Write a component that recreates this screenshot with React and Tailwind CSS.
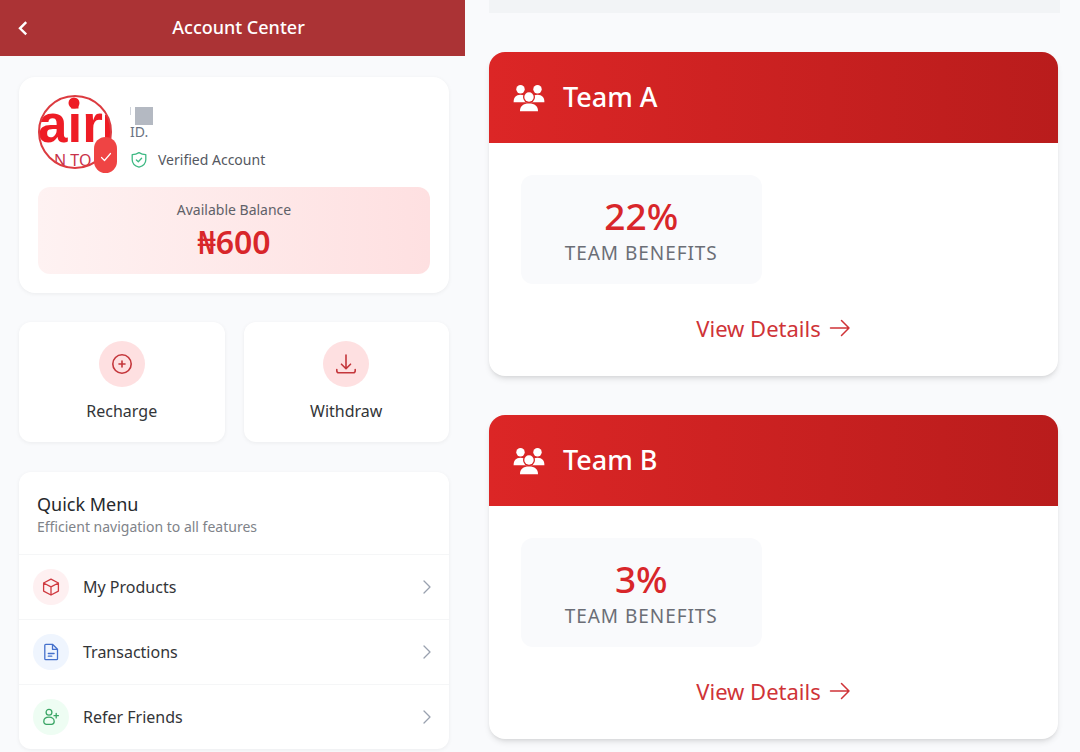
import React from "react";

const stroke = {
  fill: "none",
  stroke: "currentColor",
  strokeLinecap: "round",
  strokeLinejoin: "round",
};

function BackIcon() {
  return (
    <svg viewBox="0 0 16 16" className="size-4" {...stroke} strokeWidth="2.4" strokeLinecap="butt" strokeLinejoin="miter" aria-hidden="true">
      <path d="M11.2 2.2 5 8.3l6.2 6" />
    </svg>
  );
}

function ShieldIcon() {
  return (
    <svg viewBox="0 0 18 18" className="size-[18px] text-[#3fb984]" {...stroke} strokeWidth="1.3" aria-hidden="true">
      <path d="M9 1.600c2 1.300 4.200 2 6.800 2.100v5c0 3.600-2.600 6.200-6.800 7.500-4.200-1.300-6.800-3.900-6.800-7.500v-5C4.800 3.600 7 2.900 9 1.600Z" />
      <path d="m6.400 9 1.900 1.800 3.300-3.600" />
    </svg>
  );
}

function PlusCircleIcon() {
  return (
    <svg viewBox="0 0 24 24" className="size-6" {...stroke} strokeWidth="1.6" aria-hidden="true">
      <circle cx="12" cy="12" r="9.200" />
      <path d="M12 9v6M9 12h6" />
    </svg>
  );
}

function DownloadIcon() {
  return (
    <svg viewBox="0 0 24 24" className="size-6" {...stroke} strokeWidth="1.600" aria-hidden="true">
      <path d="M12 3v13.500M7.500 12.200l4.500 4.500 4.500-4.500M2.800 17.500v1.300c0 1.200.8 2 2 2h14.400c1.200 0 2-.8 2-2v-1.300" />
    </svg>
  );
}

function BoxIcon() {
  return (
    <svg viewBox="0 0 20 20" className="size-5" {...stroke} strokeWidth="1.300" aria-hidden="true">
      <path d="M10 2.200 17.400 6v8.100L10 18l-7.400-3.900V6ZM2.600 6l7.400 3.800L17.400 6M10 9.800V18" />
    </svg>
  );
}

function FileIcon() {
  return (
    <svg viewBox="0 0 20 20" className="size-5" {...stroke} strokeWidth="1.300" aria-hidden="true">
      <path d="M4.800 2.300h6.700l5 5v9.400c0 .6-.4 1-1 1H4.800c-.6 0-1-.4-1-1V3.300c0-.6.4-1 1-1ZM11.500 2.300v5h5M7.300 11.500h5.800M7.300 14.200h3.500" />
    </svg>
  );
}

function UserPlusIcon() {
  return (
    <svg viewBox="0 0 20 20" className="size-5" {...stroke} strokeWidth="1.300" aria-hidden="true">
      <circle cx="8" cy="5.200" r="2.900" />
      <path d="M8 10.200c3.300 0 5.200 1.700 5.200 4.300 0 1.800-1.100 2.800-2.700 2.800h-5c-1.600 0-2.700-1-2.700-2.800 0-2.600 1.900-4.300 5.200-4.300ZM15.200 6.500v4.400M13 8.700h4.400" />
    </svg>
  );
}

function ChevronIcon() {
  return (
    <svg viewBox="0 0 16 16" className="size-4 text-gray-400" {...stroke} strokeWidth="1.300" aria-hidden="true">
      <path d="m5 2 6 6-6 6" />
    </svg>
  );
}

function ArrowIcon() {
  return (
    <svg viewBox="0 0 22 22" className="size-[22px]" {...stroke} strokeWidth="1.500" aria-hidden="true">
      <path d="M1.500 11h18.500M12.500 3.500 20 11l-7.500 7.500" />
    </svg>
  );
}

function TeamIcon({ id }) {
  return (
    <svg viewBox="0 0 32 28" className="h-7 w-8" fill="currentColor" aria-hidden="true">
      <mask id={id}>
        <rect width="32" height="28" fill="white" />
        <circle cx="16" cy="13" r="6" fill="black" />
      </mask>
      <g mask={`url(#${id})`}>
        <circle cx="7.500" cy="5.200" r="4.200" />
        <circle cx="24.500" cy="5.200" r="4.200" />
        <path d="M.6 18.200c0-4.600 2.200-7.400 6.900-7.400s6.900 2.800 6.900 7.400Z" />
        <path d="M17.600 18.200c0-4.600 2.200-7.400 6.900-7.400s6.900 2.800 6.900 7.400Z" />
      </g>
      <circle cx="16" cy="13" r="4.700" />
      <path d="M7 27.200c0-5 3.200-7.600 9-7.600s9 2.600 9 7.600Z" />
    </svg>
  );
}

function Avatar() {
  return (
    <div className="relative size-[74px] shrink-0">
      <svg viewBox="0 0 74 74" className="size-full" role="img" aria-label="Profile picture">
        <defs>
          <clipPath id="avatar-clip">
            <circle cx="37" cy="37" r="36" />
          </clipPath>
        </defs>
        <g clipPath="url(#avatar-clip)" fill="#ee1c25">
          <text x="0" y="47" fontSize="53" fontWeight="700" fontFamily="'Liberation Sans', sans-serif">air</text>
          <circle cx="36" cy="8" r="5.500" />
          <path d="M67 20h6v28h-3c-2 0-3-2-3-5Z" />
          <text x="16" y="71" fontSize="16" fill="#c8324a" fontFamily="'Noto Sans', sans-serif">N TO</text>
        </g>
        <circle cx="37" cy="37" r="36" fill="none" stroke="#dc3b40" strokeWidth="2" />
      </svg>
      <span className="absolute -right-[5px] -bottom-1 flex h-9 w-[23px] items-center justify-center rounded-full bg-[#ef4444] text-white">
        <svg viewBox="0 0 12 12" className="mt-1 size-3" {...stroke} strokeWidth="1.200" aria-hidden="true">
          <path d="m1.500 6.500 3 3 6-7" />
        </svg>
      </span>
    </div>
  );
}

const actions = [
  { label: "Recharge", Icon: PlusCircleIcon },
  { label: "Withdraw", Icon: DownloadIcon },
];

const menu = [
  { label: "My Products", Icon: BoxIcon, tone: "bg-[#fef0f1] text-[#cf3a40]" },
  { label: "Transactions", Icon: FileIcon, tone: "bg-[#eff5fe] text-[#4470cc]" },
  { label: "Refer Friends", Icon: UserPlusIcon, tone: "bg-[#eefdf3] text-[#3aa565]" },
];

const teams = [
  { id: "team-a", name: "Team A", benefit: "22%" },
  { id: "team-b", name: "Team B", benefit: "3%" },
];

const softShadow = "shadow-[0_1px_4px_rgba(0,0,0,0.06)]";

function AccountCenter() {
  return (
    <section>
      <header className="grid h-14 grid-cols-[1fr_auto_1fr] items-center bg-[#ab3335] px-[15px] text-white">
        <button type="button" aria-label="Back" className="justify-self-start">
          <BackIcon />
        </button>
        <h1 className="pb-0.5 pl-3 text-lg font-medium">Account Center</h1>
      </header>

      <div className="pt-[21px] pr-4 pl-[19px]">
        <div className={`rounded-2xl bg-white px-[19px] pt-[18px] pb-[19px] ${softShadow}`}>
          <div className="flex gap-[18px]">
            <Avatar />
            <div className="flex flex-col pt-3">
              <div className="flex h-[17px] gap-1">
                <span className="h-2 w-px bg-gray-300" />
                <span className="size-[18px] bg-[#b4b9c2]" />
              </div>
              <p className="h-6 text-sm leading-4 text-gray-500">ID.</p>
              <p className="flex items-center gap-[10px] text-sm leading-6 text-[#55585f]">
                <ShieldIcon />
                Verified Account
              </p>
            </div>
          </div>
          <div className="mt-[15px] rounded-xl bg-linear-to-r from-[#fef2f2] to-[#fee0e1] pt-[11px] pb-[13px] text-center">
            <p className="text-sm leading-6 text-[#5f6168]">Available Balance</p>
            <p className="text-[32px] leading-[39px] font-semibold text-[#d8262a]">₦600</p>
          </div>
        </div>

        <div className="mt-[29px] grid grid-cols-2 gap-[19px]">
          {actions.map(({ label, Icon }) => (
            <button key={label} type="button" className={`flex flex-col items-center rounded-xl bg-white py-[19px] ${softShadow}`}>
              <span className="flex size-[46px] items-center justify-center rounded-full bg-[#fee0e1] text-[#c4363b]">
                <Icon />
              </span>
              <span className="mt-3 text-base leading-6 text-[#333538]">{label}</span>
            </button>
          ))}
        </div>

        <nav className={`mt-[30px] rounded-xl bg-white ${softShadow}`}>
          <div className="px-[18px] pt-[19px] pb-[17px]">
            <h2 className="text-lg leading-[26px] text-[#26292d]">Quick Menu</h2>
            <p className="text-sm leading-5 text-[#808389]">Efficient navigation to all features</p>
          </div>
          {menu.map(({ label, Icon, tone }) => (
            <a key={label} href="#" className="flex h-[65px] items-center border-t border-[#f5f6f7] px-[14px]">
              <span className={`flex size-9 items-center justify-center rounded-full ${tone}`}>
                <Icon />
              </span>
              <span className="ml-[14px] flex-1 text-base text-[#333538]">{label}</span>
              <ChevronIcon />
            </a>
          ))}
        </nav>
      </div>
    </section>
  );
}

function TeamCard({ id, name, benefit }) {
  return (
    <article className="overflow-hidden rounded-2xl bg-white shadow-md">
      <header className="flex h-[91px] items-center gap-[18px] bg-linear-to-r from-[#dc2626] to-[#b91c1c] px-6 text-white">
        <TeamIcon id={id} />
        <h2 className="text-[27px] font-medium">{name}</h2>
      </header>
      <div className="px-8 pt-8 pb-7">
        <div className="grid grid-cols-2 gap-6">
          <div className="rounded-xl bg-[#f9fafc] pt-[17px] pb-[18px] text-center">
            <p className="text-[37px] leading-[48px] font-medium text-[#d8262a]">{benefit}</p>
            <p className="text-[19px] leading-[26px] tracking-wider text-[#6b6e76]">TEAM BENEFITS</p>
          </div>
        </div>
        <a href="#" className="mt-6 flex h-10 items-center justify-center gap-2 text-[22px] text-[#cf3337]">
          View Details
          <ArrowIcon />
        </a>
      </div>
    </article>
  );
}

export default function App() {
  return (
    <main className="grid min-h-screen grid-cols-[465fr_615fr] bg-[#f9fafc] font-['Noto_Sans',sans-serif]">
      <AccountCenter />
      <section className="pr-[22px] pl-6">
        <div className="-mr-[2px] h-[13px] bg-[#f2f4f6]" />
        <div className="mt-[39px] flex flex-col gap-[39px]">
          {teams.map((team) => (
            <TeamCard key={team.name} {...team} />
          ))}
        </div>
      </section>
    </main>
  );
}
